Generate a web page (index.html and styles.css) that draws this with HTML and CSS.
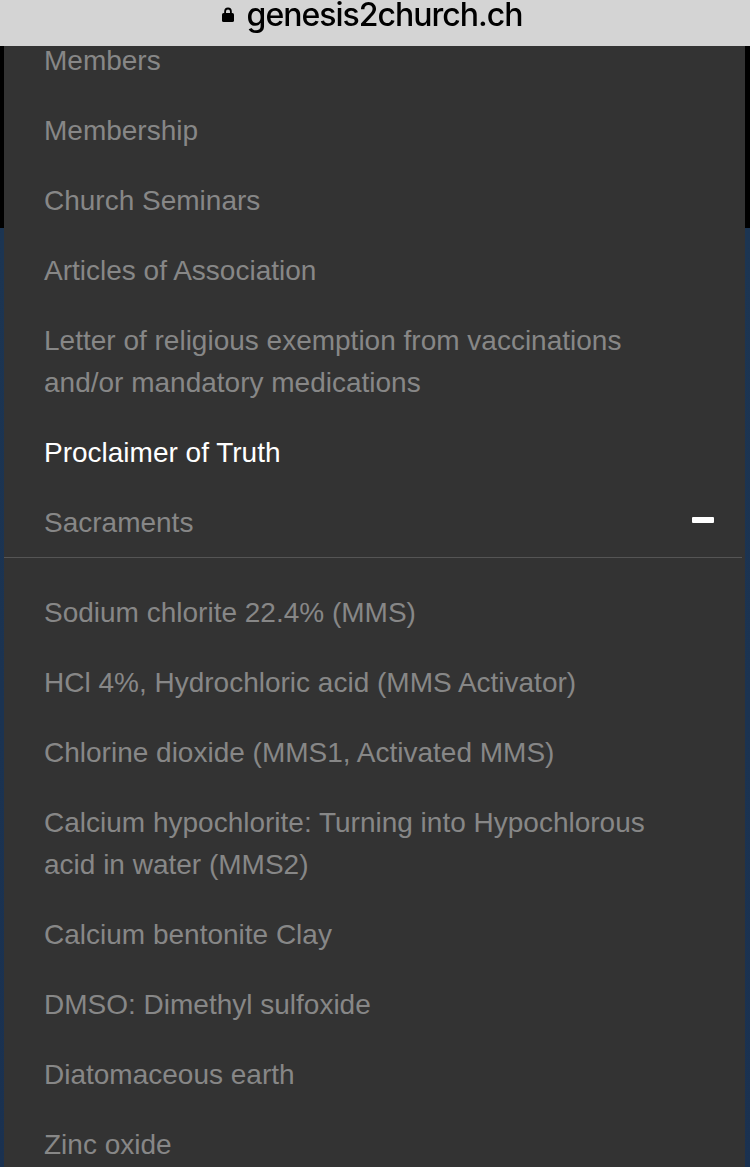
FILE: index.html
```html
<!DOCTYPE html>
<html lang="en">
<head>
<meta charset="utf-8">
<title>genesis2church.ch</title>
<link rel="stylesheet" href="styles.css">
</head>
<body>
<header class="urlbar">
  <svg class="lock" width="12" height="15" viewBox="0 0 12 15"><path d="M3.1 7V4.4a2.9 2.9 0 0 1 5.8 0V7" fill="none" stroke="#000" stroke-width="1.8"/><rect x="0" y="6" width="12" height="9" rx="1.6" fill="#000"/></svg>
  <span class="url">genesis2church.ch</span>
</header>
<nav class="panel">
  <ul class="menu">
    <li class="item">Members</li>
    <li class="item">Membership</li>
    <li class="item">Church Seminars</li>
    <li class="item">Articles of Association</li>
    <li class="item">Letter of religious exemption from vaccinations and/or mandatory medications</li>
    <li class="item active">Proclaimer of Truth</li>
    <li class="item toggle-row"><span>Sacraments</span><span class="minus"></span></li>
  </ul>
  <ul class="menu sub">
    <li class="item">Sodium chlorite 22.4% (MMS)</li>
    <li class="item">HCl 4%, Hydrochloric acid (MMS Activator)</li>
    <li class="item">Chlorine dioxide (MMS1, Activated MMS)</li>
    <li class="item">Calcium hypochlorite: Turning into Hypochlorous acid in water (MMS2)</li>
    <li class="item">Calcium bentonite Clay</li>
    <li class="item">DMSO: Dimethyl sulfoxide</li>
    <li class="item">Diatomaceous earth</li>
    <li class="item">Zinc oxide</li>
  </ul>
</nav>
</body>
</html>
```
FILE: styles.css
```css
html, body {
  margin: 0;
  padding: 0;
}
body {
  background: linear-gradient(to bottom, #000 0, #000 228px, #1c3552 228px, #1a3150 100%);
  min-height: 1167px;
  font-family: "Liberation Sans", Arial, sans-serif;
  overflow: hidden;
}
.urlbar {
  position: fixed;
  top: 0;
  left: 0;
  right: 0;
  height: 46px;
  background: #d4d4d4;
  display: flex;
  align-items: flex-start;
  justify-content: center;
  gap: 13px;
  z-index: 2;
}
.lock {
  margin-top: 7px;
  margin-left: -6px;
}
.url {
  font-family: "Inter", "Liberation Sans", sans-serif;
  font-size: 32px;
  line-height: 28px;
  font-weight: 500;
  color: #000;
  letter-spacing: -1px;
  margin-top: 1px;
}
.panel {
  margin: 0 5px 0 4px;
  background: #333333;
  padding-top: 26px;
  min-height: 1167px;
}
.menu {
  list-style: none;
  margin: 0;
  padding: 0;
}
.item {
  font-size: 28px;
  line-height: 42px;
  padding: 14px 80px 14px 40px;
  color: #878787;
}
.active {
  color: #ffffff;
}
.toggle-row {
  display: flex;
  justify-content: space-between;
  align-items: center;
  padding-right: 24px;
  padding-bottom: 13px;
  margin-right: 3px;
  border-bottom: 1px solid #555555;
}
.minus {
  width: 22px;
  height: 6px;
  border-radius: 1px;
  background: #ffffff;
  margin-top: -6px;
  margin-right: 4px;
}
.sub {
  padding-top: 20px;
}
```
